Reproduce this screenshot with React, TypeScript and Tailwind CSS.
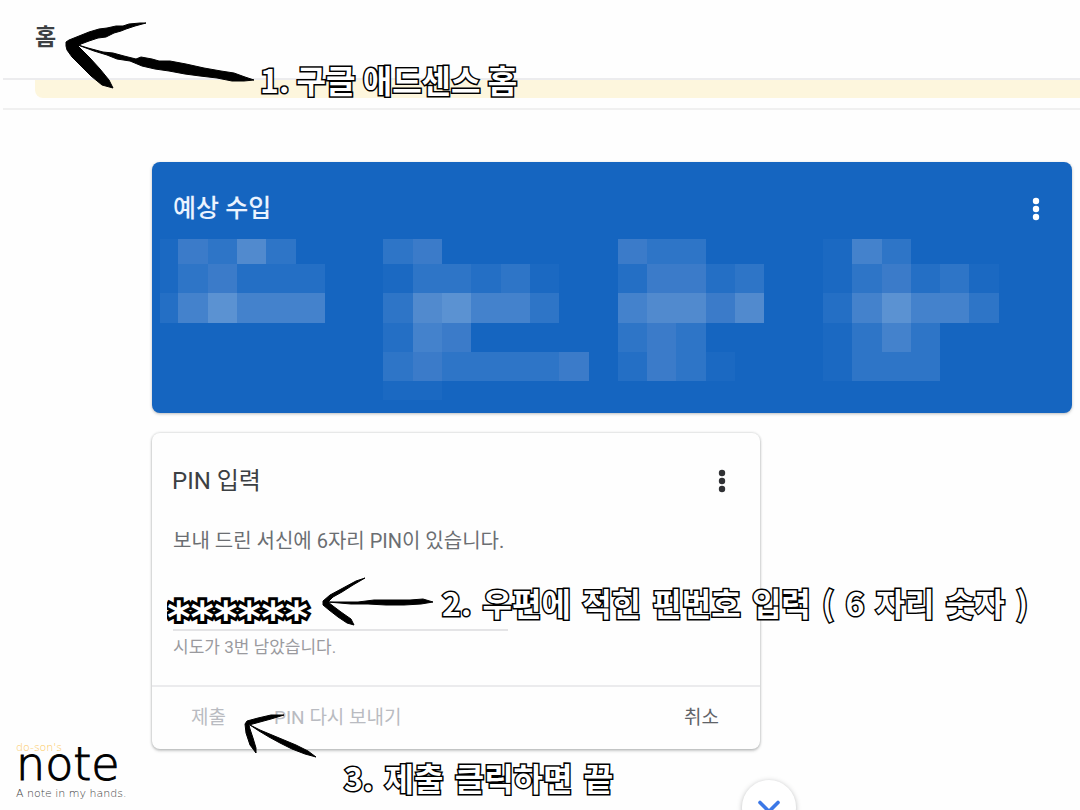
import { ChevronDown } from "lucide-react";
import type { ReactNode } from "react";

const LEVELS: Record<string, string> = {
  "1": "#1b69c2",
  "2": "#246fc5",
  "3": "#2e75c7",
  "4": "#3b7bc9",
  "5": "#4482cc",
  "6": "#518ace",
  "7": "#5b92d2",
};

const CENSOR_ROWS = [
  { y: 1, h: 25, cells: "14363...34......433....153..." },
  { y: 26, h: 29, cells: "134222..133231..24423..134231" },
  { y: 55, h: 30, cells: "257555..367553..56646..257553" },
  { y: 85, h: 29, cells: "........254.....343....1353.." },
  { y: 114, h: 29, cells: "........3433334.2431...1333.." },
  { y: 143, h: 19, cells: "........11..................." },
];

function CensoredFigures() {
  return (
    <svg viewBox="0 0 920 162" className="block w-full" aria-hidden="true" shapeRendering="crispEdges">
      {CENSOR_ROWS.map((row) =>
        row.cells.split("").map((level, i) => {
          if (level === ".") return null;
          const x = i === 0 ? 8 : Math.round(-3 + i * 29.3);
          const right = Math.round(-3 + (i + 1) * 29.3);
          return <rect key={`${row.y}-${i}`} x={x} y={row.y} width={right - x} height={row.h} fill={LEVELS[level]} />;
        }),
      )}
    </svg>
  );
}

function MoreButton({ label, className }: { label: string; className: string }) {
  return (
    <button type="button" aria-label={label} className={`flex h-8 w-8 items-center justify-center ${className}`}>
      <svg width="8" height="24" viewBox="0 0 8 24" fill="currentColor" aria-hidden="true">
        <circle cx="4" cy="4" r="3.2" />
        <circle cx="4" cy="12" r="3.2" />
        <circle cx="4" cy="20" r="3.2" />
      </svg>
    </button>
  );
}

function Note({ className, gap = "mr-1", words }: { className: string; gap?: string; words: string[] }) {
  return (
    <p
      className={`absolute z-20 font-['Noto_Sans_CJK_KR',sans-serif] text-[32px] leading-10 font-bold whitespace-nowrap text-white [-webkit-text-stroke:3px_#000] [paint-order:stroke_fill] ${className}`}
    >
      {words.map((word, i) => (
        <span key={i} className={i < words.length - 1 ? gap : ""}>
          {word}
          {i < words.length - 1 ? " " : ""}
        </span>
      ))}
    </p>
  );
}

function Arrow({ className, width, height, children }: { className: string; width: number; height: number; children: ReactNode }) {
  return (
    <svg
      className={`pointer-events-none absolute z-10 ${className}`}
      width={width}
      height={height}
      viewBox={`0 0 ${width} ${height}`}
      fill="#000"
      stroke="#000"
      strokeLinejoin="round"
      aria-hidden="true"
    >
      {children}
    </svg>
  );
}

export default function App() {
  return (
    <div className="relative min-h-screen overflow-hidden bg-[#fefefe] font-['Roboto','Noto_Sans_CJK_KR',sans-serif] text-[#3c4043]">
      <header className="ml-[3px] flex h-20 items-start border-b-2 border-[#ececee] pt-[22px] pl-8">
        <h1 className="text-[23px] leading-8 font-bold">홈</h1>
      </header>
      <div className="ml-[3px] border-b-2 border-[#f0f0f0] pb-[10px] pl-8">
        <div className="h-[18px] rounded-bl-lg bg-[#fdf6dd]" />
      </div>

      <main className="flex flex-col gap-5 pt-[52px] pr-2 pb-[60px] pl-[152px]">
        <section className="flex h-[251px] flex-col rounded-lg bg-[#1565c0] shadow-[0_1px_3px_rgba(60,64,67,0.35)]">
          <div className="flex h-[76px] items-center justify-between pt-[18px] pr-5 pl-[21px]">
            <h2 className="text-[25px] leading-8 font-medium text-[#eaf3ff]">예상 수입</h2>
            <MoreButton label="예상 수입 메뉴" className="text-white" />
          </div>
          <CensoredFigures />
        </section>

        <section className="w-full max-w-[608px] rounded-lg bg-[#fefefe] shadow-[0_0_2px_1px_rgba(60,64,67,0.14),0_2px_3px_rgba(60,64,67,0.26)]">
          <div className="flex items-center justify-between pt-8 pr-[22px] pl-5">
            <h2 className="text-2xl leading-8">PIN 입력</h2>
            <MoreButton label="PIN 입력 메뉴" className="text-[#303134]" />
          </div>
          <form className="pt-8">
            <div className="px-[21px]">
              <label htmlFor="pin" className="block text-[20px] leading-6 text-[#6b6e72]">
                보내 드린 서신에 6자리 PIN이 있습니다.
              </label>
              <input
                id="pin"
                defaultValue="******"
                maxLength={6}
                className="mt-9 -ml-4 block h-[40px] w-[340px] border-0 bg-transparent pt-4 pl-[10px] font-['DejaVu_Sans'] text-[45px] leading-none font-bold text-white outline-none [-webkit-text-stroke:6px_#000] [paint-order:stroke_fill]"
              />
              <div className="h-[2px] w-[335px] bg-[#e4e4e6]" />
              <p className="pt-1 pb-[26px] text-[17px] leading-6 text-[#9a9a9e]">시도가 3번 남았습니다.</p>
            </div>
            <div className="flex h-16 items-center border-t-2 border-[#ebebed] pr-[41px] pl-[39px] text-[19px] leading-6">
              <button type="button" className="text-[#b9bbc1]">제출</button>
              <button type="button" className="ml-12 text-[#b9bbc1]">PIN 다시 보내기</button>
              <button type="button" className="ml-auto text-[#606368]">취소</button>
            </div>
          </form>
        </section>
      </main>

      <button
        type="button"
        aria-label="아래로 스크롤"
        className="absolute -bottom-6 left-[742px] flex h-[54px] w-[54px] items-center justify-center rounded-full bg-white text-[#3b78e7] shadow-[0_1px_5px_rgba(60,64,67,0.35)]"
      >
        <ChevronDown size={36} strokeWidth={2.4} />
      </button>

      <Arrow className="top-[20px] left-[64px]" width={192} height={72}>
        <path d="M82 3 L76 3 L65 4 L59 6 L52 6 L43 8 L35 9 L25 12 L15 16 L5 20 L2 22 L2 26 L3 30 L8 37 L17 46 L27 56 L38 65 L49 68 L45 60 L36 49 L26 38 L19 31 L14 26 L17 24 L25 21 L34 18 L42 17 L50 13 L57 11 L62 9 L71 6 Z" />
        <path d="M14 25 L24 28 L39 32 L49 33 L60 36 L72 39 L77 37 L88 39 L95 41 L106 41 L122 44 L140 48 L157 51 L170 53 L181 57 L190 60 L180 61 L168 61 L153 58 L136 56 L121 54 L105 51 L91 49 L78 46 L66 41 L53 39 L43 35 L30 31 Z" />
      </Arrow>
      <Arrow className="top-[576px] left-[320px]" width={116} height={52}>
        <path d="M45 2 L36 5 L23 12 L10 19 L3 25 L3 29 L9 34 L18 41 L27 47 L34 49 L31 43 L21 36 L13 30 L8 26 L13 21 L22 16 L33 9 Z" />
        <path d="M8 26 L24 26 L38 26 L54 24 L72 24 L90 24 L103 23 L113 26 L101 28 L84 29 L66 29 L48 28 L31 28 Z" />
      </Arrow>
      <Arrow className="top-[711px] left-[242px]" width={78} height={50}>
        <path d="M42 4 L29 4 L16 7 L5 10 L3 13 L4 22 L8 34 L14 42 L14 37 L11 27 L8 18 L7 14 L18 11 L29 8 Z" />
        <path d="M8 14 L18 19 L30 24 L42 29 L54 34 L66 40 L74 46 L63 43 L50 38 L38 32 L27 26 L17 20 Z" />
      </Arrow>

      <Note className="top-[59px] left-[260px]" gap="mr-0" words={["1.", "구글", "애드센스", "홈"]} />
      <Note
        className="top-[582px] left-[442px]"
        words={["2.", "우편에", "적힌", "핀번호", "입력", "(", "6", "자리", "숫자", ")"]}
      />
      <Note className="top-[757px] left-[344px]" words={["3.", "제출", "클릭하면", "끝"]} />

      <div className="absolute bottom-2 left-4 flex flex-col font-['DejaVu_Sans',sans-serif] font-extralight">
        <span className="text-[11px] leading-3 text-[#fbc85c]">do-son's</span>
        <span className="-mt-3 text-[46px] leading-[44px] text-black [-webkit-text-stroke:1px_#000]">note</span>
        <span className="text-[11px] leading-4 text-[#444]">A note in my hands.</span>
      </div>
    </div>
  );
}
